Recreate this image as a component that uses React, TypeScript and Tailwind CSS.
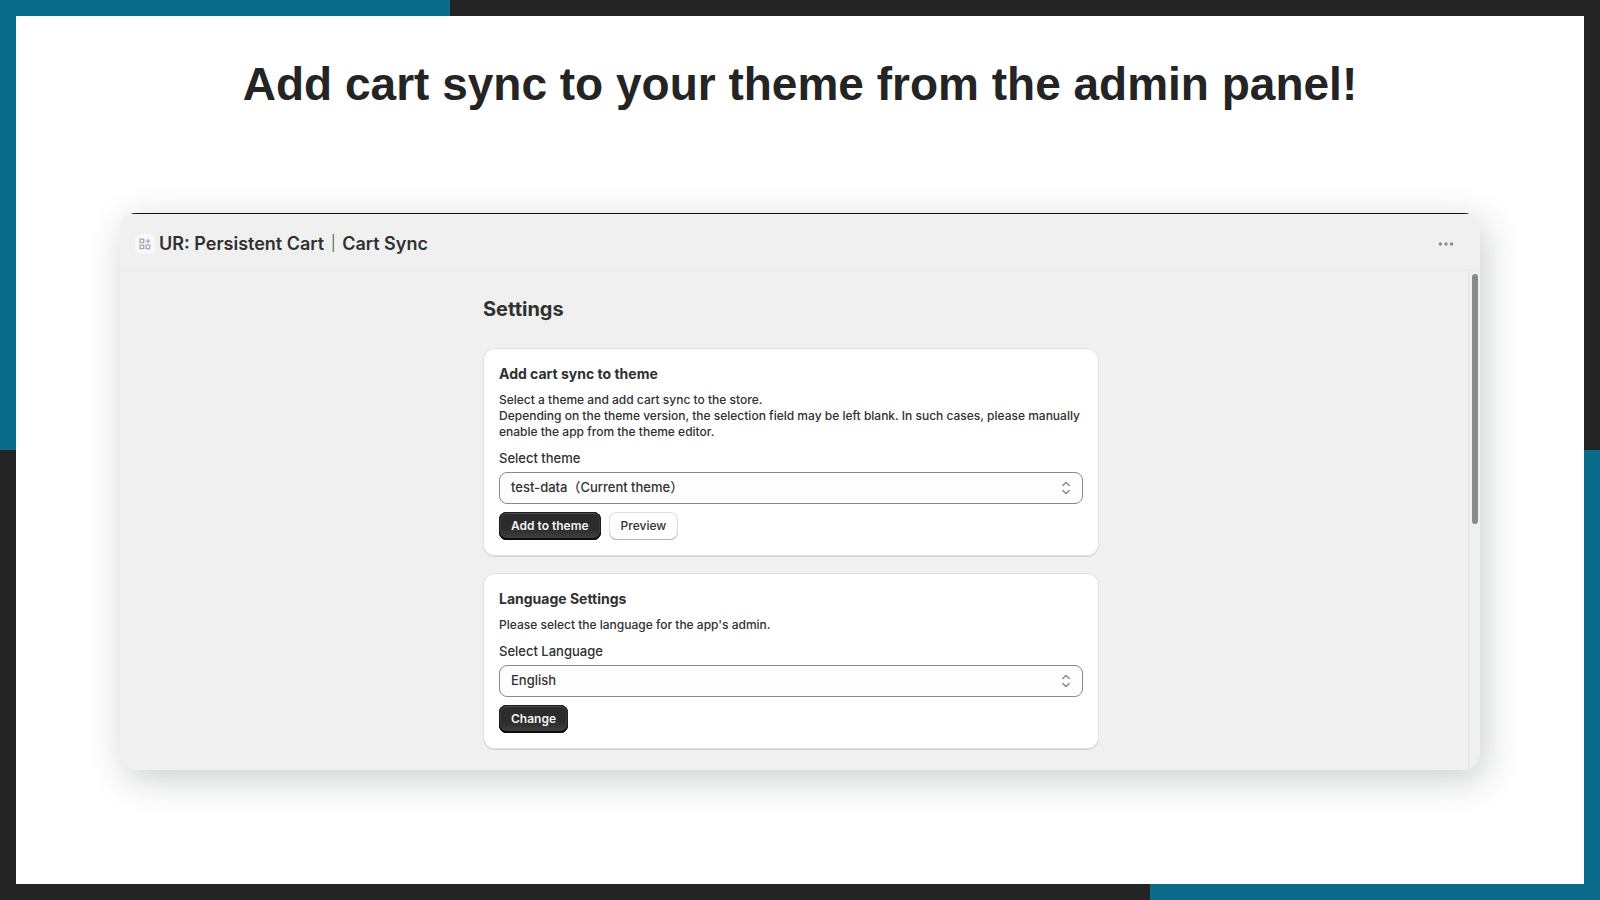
import { useId, type ReactNode } from "react";

function SelectField({ label, options }: { label: string; options: string[] }) {
  const id = useId();
  return (
    <div className="flex flex-col gap-1">
      <label htmlFor={id} className="text-[13px] leading-5">
        {label}
      </label>
      <div className="relative">
        <select
          id={id}
          className="h-8 w-full appearance-none rounded-lg border border-[#8a8a8a] bg-[#fdfdfd] px-[11px] text-[13px] text-[#303030]"
        >
          {options.map((option) => (
            <option key={option}>{option}</option>
          ))}
        </select>
        <svg
          viewBox="0 0 10 14"
          className="pointer-events-none absolute top-[9px] right-3 h-[14px] w-[10px]"
          fill="none"
          stroke="#858585"
          strokeWidth="1.4"
          strokeLinecap="round"
          strokeLinejoin="round"
        >
          <path d="M1.7 4.4 5 1.4 8.3 4.4M1.7 9.6 5 12.6 8.3 9.6" />
        </svg>
      </div>
    </div>
  );
}

function PrimaryButton({ children }: { children: ReactNode }) {
  return (
    <button
      type="button"
      className="h-7 rounded-lg bg-linear-to-b from-[#2c2c2c] from-60% to-[#444444] px-3 text-xs font-semibold text-[#f4f4f4] shadow-[inset_0_-2px_0_#0c0c0c,inset_0_0_0_1px_#1c1c1c,inset_0_2px_0_#4c4c4c,inset_1px_0_0_1px_#3c3c3c,inset_-1px_0_0_1px_#3c3c3c]"
    >
      {children}
    </button>
  );
}

function SecondaryButton({ children }: { children: ReactNode }) {
  return (
    <button
      type="button"
      className="h-7 rounded-lg bg-white px-3 text-xs font-[550] text-[#303030] shadow-[inset_0_-1px_0_#b5b5b5,inset_0_0_0_1px_#e0e0e0]"
    >
      {children}
    </button>
  );
}

function Card({ title, children }: { title: string; children: ReactNode }) {
  return (
    <section className="flex flex-col gap-2 rounded-xl bg-white p-4 shadow-[inset_0_0_0_1px_#e0e0e0,0_1px_0_#d0d2d2]">
      <h3 className="text-sm leading-5 font-[650]">{title}</h3>
      {children}
    </section>
  );
}

function AppIcon() {
  return (
    <span className="grid size-5 place-items-center rounded-md bg-[#f6f8fb]">
      <svg viewBox="0 0 12 12" className="size-3" fill="none" stroke="#a3abb5" strokeWidth="1.3">
        <path d="M1.1 1.1h3.6v3.6H1.1zM1.1 7.1h3.6v3.6H1.1zM7.1 7.1h3.6v3.6H7.1zM8.9.8v4.6M6.6 3.1h4.6" />
      </svg>
    </span>
  );
}

export default function App() {
  return (
    <div className="flex min-h-screen bg-[#242424] bg-[image:linear-gradient(#0a6c8a,#0a6c8a),linear-gradient(#0a6c8a,#0a6c8a)] bg-[size:450px_450px] bg-[position:left_top,right_bottom] bg-no-repeat p-4">
      <main className="flex flex-1 flex-col bg-white px-[104px] pt-10 pb-10">
        <h1 className="text-center font-['Liberation_Sans',Arial,sans-serif] text-[46px] leading-[56px] font-bold text-[#242424]">
          Add cart sync to your theme from the admin panel!
        </h1>

        <div className="mt-[101px] overflow-hidden rounded-2xl bg-[#f0f0f0] font-['Inter','Noto_Sans_CJK_JP',sans-serif] font-[450] text-[#303030] shadow-[5px_9px_36px_rgba(30,38,40,0.23)]">
          <header className="flex h-[58px] items-center justify-between border-b border-[#e8e8e8] pt-1 pr-[26px] pl-[15px] shadow-[inset_0_1px_0_#111111]">
            <div className="flex items-center gap-1">
              <AppIcon />
              <h2 className="text-lg font-semibold">UR: Persistent Cart｜Cart Sync</h2>
            </div>
            <button type="button" aria-label="More actions">
              <svg viewBox="0 0 16 4" className="h-1 w-4" fill="#8a8a8a">
                <circle cx="2.4" cy="2" r="1.7" />
                <circle cx="8" cy="2" r="1.7" />
                <circle cx="13.6" cy="2" r="1.7" />
              </svg>
            </button>
          </header>

          <div className="flex">
            <div className="flex-1 pt-6 pr-1.5 pb-[21px]">
              <div className="mx-auto w-full max-w-[616px]">
                <h2 className="mb-[25px] text-xl leading-7 font-[650]">Settings</h2>

                <div className="flex flex-col gap-[17px]">
                  <Card title="Add cart sync to theme">
                    <p className="text-xs leading-4">
                      Select a theme and add cart sync to the store.
                      <br />
                      Depending on the theme version, the selection field may be left blank. In such
                      cases, please manually enable the app from the theme editor.
                    </p>
                    <SelectField label="Select theme" options={["test-data（Current theme）"]} />
                    <div className="flex gap-2">
                      <PrimaryButton>Add to theme</PrimaryButton>
                      <SecondaryButton>Preview</SecondaryButton>
                    </div>
                  </Card>

                  <Card title="Language Settings">
                    <p className="text-xs leading-4">
                      Please select the language for the app's admin.
                    </p>
                    <SelectField label="Select Language" options={["English"]} />
                    <div className="flex">
                      <PrimaryButton>Change</PrimaryButton>
                    </div>
                  </Card>
                </div>
              </div>
            </div>
            <div className="w-3 border-l border-[#e2e4e4] pt-[3px] pl-[3px]">
              <div className="h-[250px] w-1.5 rounded-full bg-[#8a8a8a]" />
            </div>
          </div>
        </div>
      </main>
    </div>
  );
}
